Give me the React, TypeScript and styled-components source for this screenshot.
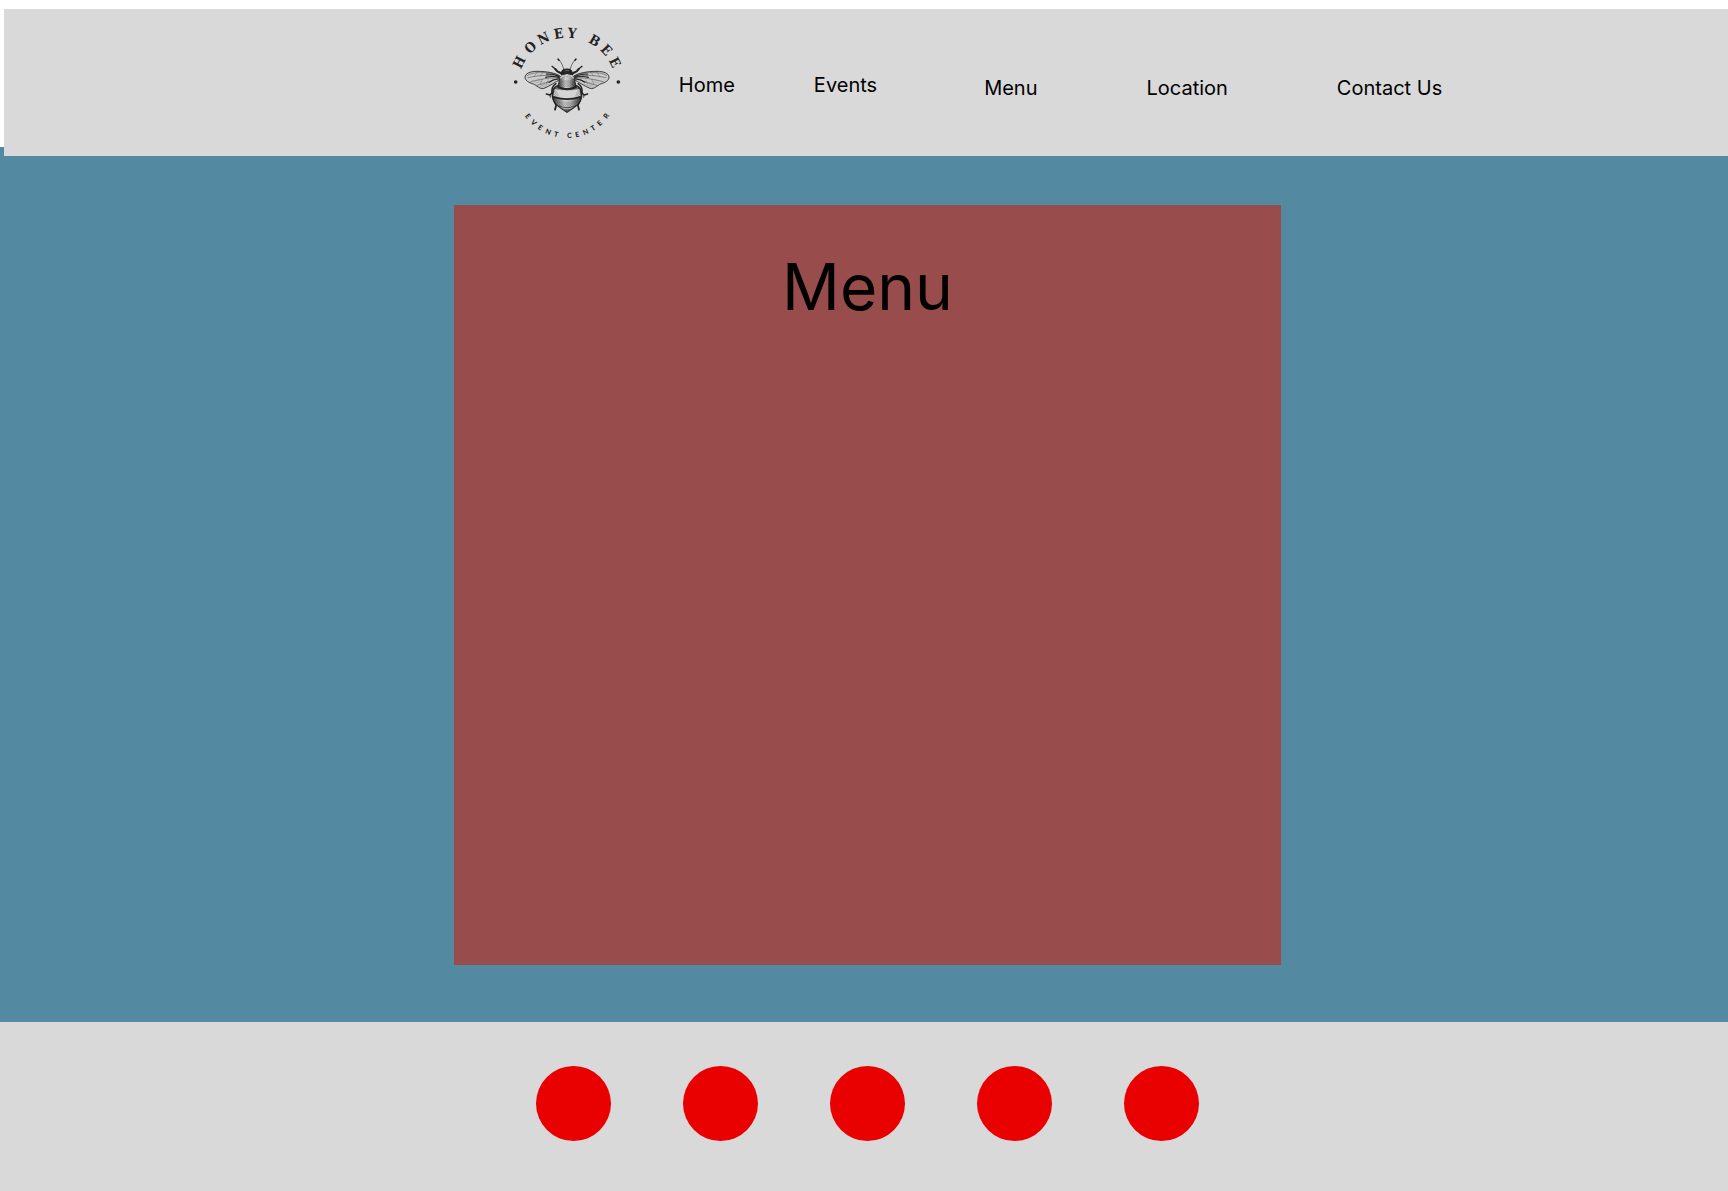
import React from "react";
import styled, { createGlobalStyle } from "styled-components";

const GlobalStyle = createGlobalStyle`
  *, *::before, *::after { box-sizing: border-box; }
  html, body, #root { height: 100%; }
  body {
    margin: 0;
    background: #ffffff;
    color: #000000;
    font-family: Inter, "Liberation Sans", sans-serif;
  }
`;

const Page = styled.div`
  display: flex;
  flex-direction: column;
  min-height: 100%;
  background: linear-gradient(#ffffff 147px, #548aa1 147px);
`;

const Header = styled.header`
  display: flex;
  align-items: center;
  justify-content: center;
  margin: 9px 0 0 4px;
  padding: 6px 0 6px 210px;
  background: #d9d9d9;
`;

const HomeLink = styled.a`
  display: block;
  flex: none;
  margin-right: 44px;
`;

const LogoDrawing = styled.svg`
  display: block;
  width: 135px;
  height: 135px;
`;

const Nav = styled.nav`
  display: flex;
  align-items: center;
  gap: 107px;
`;

const NavGroup = styled.ul<{ $gap: number; $drop: number }>`
  display: flex;
  gap: ${(p) => p.$gap}px;
  margin: 0;
  padding: ${(p) => p.$drop}px 0 0;
  list-style: none;
`;

const NavLink = styled.a`
  display: block;
  color: #000000;
  font-size: 20px;
  line-height: 24px;
  text-decoration: none;
  white-space: nowrap;
`;

const Main = styled.main`
  display: flex;
  flex: 1;
  padding: 49px 0 57px 7px;
`;

const Card = styled.section`
  flex: none;
  width: 48%;
  min-height: 760px;
  margin: 0 auto;
  padding: 43px 24px;
  background: #984c4c;
`;

const Title = styled.h1`
  margin: 0;
  font-size: 64px;
  font-weight: 400;
  line-height: 78px;
  text-align: center;
`;

const Footer = styled.footer`
  display: flex;
  justify-content: center;
  gap: 72px;
  padding: 44px 0 50px 7px;
  background: #d9d9d9;
`;

const SocialLink = styled.a`
  width: 75px;
  height: 75px;
  border-radius: 50%;
  background: #e90000;
`;

const INK = "#242223";
const CENTER = { x: 201, y: 215 };

type Glyph = [letter: string, angle: number, advance: number];

// Angles are degrees clockwise from twelve o'clock; advances are in em.
const NAME: Glyph[] = [
  ["H", -63, 0.851], ["O", -43, 0.785], ["N", -26, 0.823], ["E", -9, 0.686],
  ["Y", 6, 0.714], [" ", 18, 0.313], ["B", 31, 0.761], ["E", 47, 0.686], ["E", 63, 0.686],
];

// Angles are degrees counter-clockwise from six o'clock.
const TAGLINE: Glyph[] = [
  ["E", -53, 0.58], ["V", -43, 0.64], ["E", -33, 0.58], ["N", -23, 0.66], ["T", -13, 0.58],
  [" ", -5, 0.27], ["C", 3, 0.66], ["E", 12, 0.58], ["N", 22, 0.66], ["T", 32, 0.58],
  ["E", 42, 0.58], ["R", 53, 0.61],
];

function arc(glyphs: Glyph[], radius: number, size: number, below: boolean) {
  const xs: number[] = [];
  const ys: number[] = [];
  const turns: number[] = [];
  glyphs.forEach(([, angle, advance]) => {
    const a = (angle * Math.PI) / 180;
    const turn = below ? -a : a;
    const half = (advance * size) / 2;
    const side = below ? 1 : -1;
    xs.push(CENTER.x + radius * Math.sin(a) - half * Math.cos(turn));
    ys.push(CENTER.y + side * radius * Math.cos(a) - half * Math.sin(turn));
    turns.push((turn * 180) / Math.PI);
  });
  return { x: xs.join(" "), y: ys.join(" "), rotate: turns.join(" ") };
}

const word = (glyphs: Glyph[]) => glyphs.map(([letter]) => letter).join("");

function BeeSide() {
  return (
    <g fill="none" stroke={INK} strokeLinecap="round" strokeLinejoin="round">
      <path d="M191 163 C189 151 184 143 177 134" strokeWidth="1.8" />
      <path d="M177 136 L174 132" strokeWidth="4.5" />
      <path d="M182 174 L172 169 L166 162" strokeWidth="6" />
      <path d="M166 162 L156 154" strokeWidth="4" />
      <path d="M168 206 C157 212 155 223 156 233 L150 240 L139 237" strokeWidth="4.5" />
      <path d="M150 240 L151 247" strokeWidth="2.5" />
      <path d="M163 251 C159 260 169 264 168 272 L165 284" strokeWidth="5.5" />
      <path
        d="M181 184 C168 174 141 169 111 169 C91 169 76 175 75 186 C75 197 87 203 100 207 C110 211 120 224 132 220 C150 213 164 202 181 193 Z"
        fill="#cbcbcb"
        strokeWidth="2.6"
      />
      <path d="M179 182 C160 174 137 172 118 173 C103 173 91 176 82 181 M179 186 C155 180 128 178 84 188 M178 189 C149 186 126 193 92 200 M176 192 C154 194 137 207 111 211" strokeWidth="1.3" />
      <path d="M177 184 C162 178 150 177 139 177 M178 187 C164 184 148 184 137 187 M178 191 C164 192 154 197 147 202" strokeWidth="3.4" />
      <path d="M145 174 L139 185 M128 174 L121 183 M110 173 L103 184 M145 194 L139 207 M127 193 L121 206 M159 190 L153 201" strokeWidth="0.8" />
      <path d="M98 199 L119 193 M106 204 L126 198 M114 209 L134 202 M120 214 L143 204 M124 217 L150 207" stroke="#777777" strokeWidth="1" />
    </g>
  );
}

function Logo() {
  return (
    <LogoDrawing viewBox="0 0 405 405" role="img" aria-label="Honey Bee Event Center">
      <defs>
        <pattern id="stipple" width="5" height="5" patternUnits="userSpaceOnUse">
          <circle cx="1.3" cy="1.3" r="0.9" fill={INK} />
          <circle cx="3.8" cy="3.8" r="0.9" fill={INK} />
        </pattern>
        <linearGradient id="shade">
          <stop offset="0" stopColor="#222222" />
          <stop offset="0.2" stopColor="#808080" />
          <stop offset="0.42" stopColor="#d4d4d4" />
          <stop offset="0.64" stopColor="#b4b4b4" />
          <stop offset="1" stopColor="#222222" />
        </linearGradient>
      </defs>
      <text
        fill={INK}
        fontFamily='"DejaVu Serif Condensed", "DejaVu Serif", serif'
        fontWeight="700"
        fontSize="41"
        {...arc(NAME, 147, 41, false)}
      >
        {word(NAME)}
      </text>
      <text fill={INK} fontFamily="Lato, sans-serif" fontWeight="900" fontSize="21" {...arc(TAGLINE, 154, 21, true)}>
        {word(TAGLINE)}
      </text>
      <circle cx="47" cy="201" r="5.5" fill={INK} />
      <circle cx="355" cy="201" r="5.5" fill={INK} />
      <BeeSide />
      <g transform="translate(402 0) scale(-1 1)">
        <BeeSide />
      </g>
      <path
        d="M177 211 C160 214 154 231 157 245 C159 266 181 279 201 292 C221 279 243 266 245 245 C248 231 242 214 225 211 Z"
        fill="url(#shade)"
        stroke={INK}
        strokeWidth="3.5"
      />
      <path d="M164 222 Q201 232 238 222 L242 243 Q201 255 160 243 Z" fill="#d4d4d4" />
      <path d="M163 222 Q173 228 177 246 L160 243 Z M239 222 Q229 228 225 246 L242 243 Z" fill="url(#stipple)" />
      <path d="M160 246 Q201 259 242 246" fill="none" stroke={INK} strokeWidth="5" />
      <path d="M174 272 Q201 284 228 272" fill="none" stroke={INK} strokeWidth="2" />
      <path d="M168 254 Q201 266 235 254 L226 271 L201 287 L176 271 Z" fill="url(#stipple)" />
      <path d="M184 279 Q201 287 218 279 L201 292 Z" fill={INK} opacity="0.6" />
      <path
        d="M181 187 C189 181 213 181 221 187 C225 198 228 209 228 216 Q201 227 174 216 C174 209 177 198 181 187 Z"
        fill="url(#shade)"
        stroke={INK}
        strokeWidth="2.5"
      />
      <path d="M184 197 Q201 191 218 197 L224 213 Q201 221 178 213 Z" fill="url(#stipple)" />
      <path d="M173 216 Q201 229 229 216" fill="none" stroke={INK} strokeWidth="6" />
      <path d="M181 190 C187 179 214 179 221 190" fill="none" stroke="#d9d9d9" strokeWidth="4" />
      <path d="M183 180 L186 167 Q191 161 201 162 Q211 161 215 167 L219 180 Q201 172 183 180 Z" fill={INK} stroke={INK} strokeWidth="3" />
      <path d="M194 168 Q201 164 207 168" fill="none" stroke="#888888" strokeWidth="2" />
    </LogoDrawing>
  );
}

const MAIN_LINKS = [
  { label: "Home", href: "#home" },
  { label: "Events", href: "#events" },
];
const INFO_LINKS = [
  { label: "Menu", href: "#menu" },
  { label: "Location", href: "#location" },
  { label: "Contact Us", href: "#contact" },
];
const SOCIAL_LINKS = ["Facebook", "Instagram", "Twitter", "YouTube", "Email"];

function Links({ items }: { items: { label: string; href: string }[] }) {
  return (
    <>
      {items.map(({ label, href }) => (
        <li key={label}>
          <NavLink href={href}>{label}</NavLink>
        </li>
      ))}
    </>
  );
}

export default function App() {
  return (
    <>
      <GlobalStyle />
      <Page>
        <Header>
          <HomeLink href="#home">
            <Logo />
          </HomeLink>
          <Nav>
            <NavGroup $gap={79} $drop={4}>
              <Links items={MAIN_LINKS} />
            </NavGroup>
            <NavGroup $gap={109} $drop={10}>
              <Links items={INFO_LINKS} />
            </NavGroup>
          </Nav>
        </Header>
        <Main>
          <Card id="menu">
            <Title>Menu</Title>
          </Card>
        </Main>
        <Footer>
          {SOCIAL_LINKS.map((name) => (
            <SocialLink key={name} href={`#${name.toLowerCase()}`} aria-label={name} />
          ))}
        </Footer>
      </Page>
    </>
  );
}
